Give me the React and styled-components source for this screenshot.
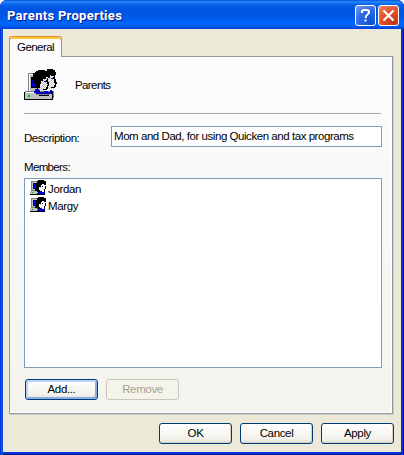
import React from 'react';
import styled, { createGlobalStyle } from 'styled-components';

const GlobalStyle = createGlobalStyle`
  * { box-sizing: border-box; }
  body { margin: 0; background: #fff; overflow: hidden; }
`;

const Dialog = styled.main`
  width: 404px;
  height: 455px;
  display: flex;
  flex-direction: column;
  overflow: hidden;
  border-radius: 7px 7px 0 0;
  background: #ece9d8;
  box-shadow: inset 1px 0 #0831d9, inset 3px 0 #0855dd, inset -1px 0 #00138c, inset -3px 0 #0831d9,
    inset 0 -1px #00138c, inset 0 -3px #0831d9;
  color: #000;
  font: 11.5px/16px "Liberation Sans", Arial, sans-serif;
  letter-spacing: -0.35px;
`;

const TitleBar = styled.header`
  height: 29px;
  flex: none;
  display: flex;
  align-items: center;
  gap: 2px;
  padding: 2px 5px 0 7px;
  background: linear-gradient(#0850d8 0, #2b8cff 2px, #1673f5 3px, #0562ea 5px, #0054e3 9px, #0055e5 16px, #0066fc 23px, #0060f4 26px, #003dd7 29px);
`;

const Title = styled.h1`
  flex: 1;
  margin: 1px 0 0;
  color: #fff;
  font: 700 13px/18px Roboto, "Liberation Sans", sans-serif;
  letter-spacing: 0.3px;
  text-shadow: 1px 1px #0a1883;
`;

const CaptionButton = styled.button`
  width: 21px;
  height: 21px;
  padding: 0;
  display: grid;
  place-items: center;
  border: 1px solid #fff;
  border-radius: 3px;
  background: ${p => p.$close
    ? 'radial-gradient(circle at 80% 90%, #c53614, #e35129 55%, #ef8b6d 100%)'
    : 'radial-gradient(circle at 80% 90%, #0750d5, #3069e5 55%, #779df2 100%)'};
`;

const Body = styled.div`
  flex: 1;
  display: flex;
  flex-direction: column;
  padding: 7px 11px 12px 9px;
`;

const Tab = styled.div`
  width: 53px;
  height: 21px;
  margin-bottom: -1px;
  z-index: 1;
  padding: 2px 0 0 7px;
  border: 1px solid #919b9c;
  border-top: 1px solid #e68b2c;
  border-bottom: 0;
  border-radius: 3px 3px 0 0;
  box-shadow: inset 0 2px #ffc73c;
  background: #fcfcfe;
  letter-spacing: -0.55px;
`;

const Panel = styled.section`
  width: 384px;
  height: 358px;
  display: flex;
  flex-direction: column;
  padding: 12px 11px 0 14px;
  border: 1px solid #919b9c;
  box-shadow: inset -1px -1px #fff, 1px 1px #d0cebf;
  background: linear-gradient(#fcfcfe, #f4f3ee);
`;

const GroupHeader = styled.div`
  width: 357px;
  height: 45px;
  display: flex;
  gap: 18px;
  border-bottom: 1px solid #aca899;
`;

const GroupName = styled.span`
  padding-top: 8px;
  letter-spacing: -0.6px;
`;

const FieldRow = styled.label`
  display: flex;
  width: 358px;
  height: 21px;
  margin-top: 12px;
`;

const FieldLabel = styled.span`
  width: 87px;
  padding-top: 4px;
  letter-spacing: -0.45px;
`;

const TextField = styled.input`
  width: 271px;
  height: 21px;
  padding: 0 2px 2px;
  border: 1px solid #7f9db9;
  border-radius: 0;
  background: #fff;
  color: #000;
  font: inherit;
  letter-spacing: -0.45px;
`;

const MembersLabel = styled.div`
  margin-top: 12px;
  height: 19px;
  letter-spacing: -0.65px;
`;

const MemberList = styled.ul`
  width: 358px;
  height: 190px;
  margin: 0;
  padding: 1px 5px;
  list-style: none;
  border: 1px solid #7f9db9;
  background: #fff;
`;

const Member = styled.li`
  height: 17px;
  display: flex;
  align-items: flex-start;
  gap: 2px;
  line-height: 18px;
`;

const ButtonRow = styled.div`
  display: flex;
  gap: ${p => p.$gap}px;
  margin: ${p => p.$margin};
  justify-content: ${p => (p.$end ? 'flex-end' : 'flex-start')};
`;

const Button = styled.button`
  width: 73px;
  height: 21px;
  padding: 0;
  border: 1px solid ${p => (p.disabled ? '#c9c7ba' : '#003c74')};
  border-radius: 3px;
  background: ${p => (p.disabled ? '#f5f4ea' : 'linear-gradient(#fff, #f3f2ec 75%, #e2dfd5)')};
  box-shadow: ${p => (p.disabled ? 'none' : p.$focus
    ? 'inset 2px 2px #bcd4f6, inset -2px -2px #89ade4'
    : 'inset -1px -1px #d6d0c5')};
  color: ${p => (p.disabled ? '#a1a192' : '#000')};
  font: inherit;
  letter-spacing: inherit;
  line-height: 19px;
`;

const Icon = styled.svg`
  display: block;
  flex: none;
`;

function GroupIcon() {
  return (
    <Icon width="33" height="32" viewBox="0 0 33 32" shapeRendering="crispEdges" aria-hidden="true">
      <defs>
        <pattern id="skin" width="2" height="2" patternUnits="userSpaceOnUse">
          <path fill="#fff" d="M0 0h2v2H0z" />
          <path fill="#c0c0c0" d="M0 0h1v1H0zM1 1h1v1H1z" />
        </pattern>
      </defs>
      <path fill="#808080" d="M4 4h12v1H5v18H4z" />
      <path fill="#c0c0c0" d="M5 5h15v18H5z" />
      <path fill="#fff" d="M5 5h9v1H6v16H5z" />
      <path fill="#000" d="M7 8h7v11H7z" />
      <path fill="#0000c0" d="M8 9h6v9H8z" />
      <path fill="#808080" d="M1 22h29v1H2v7H1z" />
      <path fill="#c0c0c0" d="M1 23h27v7H1z" />
      <path fill="#fff" d="M2 23h25v1H2z" />
      <path fill="#000" d="M0 23h1v8H0zM1 30h28v1H1zM28 23h1v7h-1zM15 26h10v1H15z" />
      <path fill="#808080" d="M29 22h1v7h-1zM12 25h13v1H12z" />
      <path fill="#00c000" d="M4 26h2v2H4z" />
      <path fill="url(#skin)" d="M24 5h6v4h1v4h1v2h-1v3h-1v2h-6z" />
      <path fill="#000" d="M30 6h1v4h1v3h1v2h-1v3h-1v1h-4v-1h3v-2h1v-2h-1v-4h-1z" />
      <path fill="url(#skin)" d="M16 9h7v4h1v3h1v1h-1v3h-1v2h-7v-2h-1v-5h1z" />
      <path fill="#000" d="M23 9h1v4h1v4h-1v3h-1v1h-4v-1h3v-2h1v-2h1v-1h-1v-2h-1v-2h1z" />
      <path fill="#000" d="M12 2h2V1h7v1h2V0h6v1h2v2h1v3h-2v1h-3V6h-1v3h-2V8h-2v2h-3v2h-2v3h-1v4h-2v2h-1v-2h-1v-3h-1v-2h-2v-3h-1V8h1V4h1z" />
      <path fill="#0000c0" d="M20 12h2v1h-2zM27 9h2v1h-2z" />
      <path fill="#0000c0" d="M11 20h4v1h1v2h4v-1h4v1h2v-2h2v1h1v1h-1v2H12v-1h-2v-2h1z" />
    </Icon>
  );
}

function MemberIcon() {
  return (
    <Icon width="16" height="16" viewBox="0 0 16 16" shapeRendering="crispEdges" aria-hidden="true">
      <path fill="#808080" d="M1 1h7v1H2v9H1z" />
      <path fill="#c0c0c0" d="M2 2h6v9H2z" />
      <path fill="#000080" d="M3 3h4v6H3z" />
      <path fill="#0000ff" d="M4 4h2v4H4z" />
      <path fill="#808080" d="M1 10h12v1H1z" />
      <path fill="#c0c0c0" d="M0 11h14v3H0z" />
      <path fill="#fff" d="M8 4h6v3h1v2h-1v3H9z" />
      <path fill="#c0c0c0" d="M10 7h1v1h-1zM12 8h1v1h-1zM11 10h1v1h-1z" />
      <path fill="#000" d="M0 14h15v1H0zM8 0h6v1h2v4h-2V4h-2v1h-1v2H9v3h1v2H7v-1H5V9h1V3h1V1h1zM15 6h1v3h-1zM14 9h1v3h-1zM12 6h1v1h-1z" />
      <path fill="#0000c0" d="M8 12h2v-1h2v1h3v2H7v-1h1z" />
      <path fill="#00a000" d="M2 12h1v1H2z" />
    </Icon>
  );
}

export default function App() {
  return (
    <>
      <GlobalStyle />
      <Dialog>
        <TitleBar>
          <Title>Parents Properties</Title>
          <CaptionButton aria-label="Help">
            <Icon width="19" height="19" fill="none" stroke="#fff" strokeWidth="2">
              <path d="M6 7V5.5Q6 4 8 4h2.5Q13 4 13 6q0 1.5-1.5 2.5T9.5 12M8.5 14.5h2" />
            </Icon>
          </CaptionButton>
          <CaptionButton $close aria-label="Close">
            <Icon width="19" height="19" fill="none" stroke="#fff" strokeWidth="2.2">
              <path d="M4.5 4.5l10 10M14.5 4.5l-10 10" />
            </Icon>
          </CaptionButton>
        </TitleBar>
        <Body>
          <Tab>General</Tab>
          <Panel>
            <GroupHeader>
              <GroupIcon />
              <GroupName>Parents</GroupName>
            </GroupHeader>
            <FieldRow>
              <FieldLabel>Description:</FieldLabel>
              <TextField readOnly value="Mom and Dad, for using Quicken and tax programs" />
            </FieldRow>
            <MembersLabel>Members:</MembersLabel>
            <MemberList>
              <Member><MemberIcon />Jordan</Member>
              <Member><MemberIcon />Margy</Member>
            </MemberList>
            <ButtonRow $gap={8} $margin="11px 0 0 1px">
              <Button $focus>Add...</Button>
              <Button disabled>Remove</Button>
            </ButtonRow>
          </Panel>
          <ButtonRow $gap={8} $margin="9px -1px 0 0" $end>
            <Button>OK</Button>
            <Button>Cancel</Button>
            <Button>Apply</Button>
          </ButtonRow>
        </Body>
      </Dialog>
    </>
  );
}
